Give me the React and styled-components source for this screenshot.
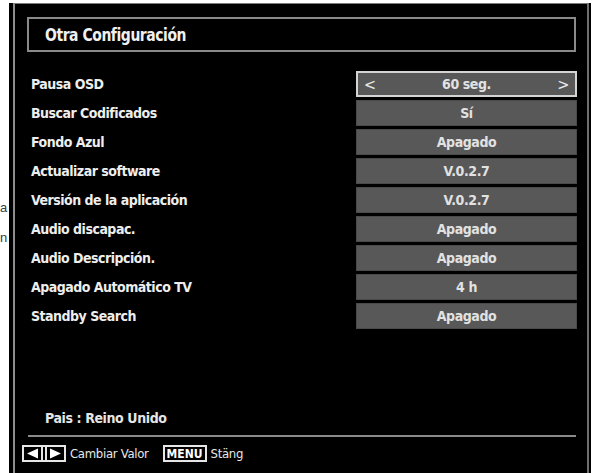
import React from 'react';
import styled, { createGlobalStyle } from 'styled-components';

const GlobalStyle = createGlobalStyle`
  html, body {
    margin: 0;
    padding: 0;
    background: #ffffff;
  }
  * {
    box-sizing: border-box;
  }
`;

const TV_FONT = `"DejaVu Sans", sans-serif`;

const Page = styled.div`
  display: flex;
  width: 593px;
  height: 473px;
  padding-top: 3px;
  overflow: hidden;
  background: #ffffff;
`;

// bits of the printed page that peek out left of the screen
const Gutter = styled.div`
  width: 9px;
  flex-shrink: 0;
  display: flex;
  flex-direction: column;
  align-items: flex-start;
  padding-top: 190px;
  font-family: "Liberation Sans", sans-serif;
  font-size: 13px;
  line-height: 30px;
  color: #3a3a3a;
`;

const StrayLetter = styled.span`
  display: block;
`;

const Frame = styled.div`
  flex: 1;
  margin-right: 2px;
  padding: 0 2px 0 4px;
  background: #000000;
`;

const Inner = styled.div`
  height: 100%;
  display: flex;
  flex-direction: column;
  border-left: 2px solid #8c8c8c;
  border-top: 1px solid #7a7a7a;
  border-right: 2px solid #6e6e6e;
  padding: 13px 11px 0 12px;
  font-family: ${TV_FONT};
  font-stretch: condensed;
  color: #ececec;
`;

const TitleBox = styled.div`
  height: 35px;
  display: flex;
  align-items: center;
  padding-left: 16px;
  border: 2px solid #8a8a8a;
  margin-bottom: 19px;
`;

const Title = styled.h1`
  margin: 0;
  font-size: 18px;
  font-weight: 700;
  letter-spacing: -0.5px;
  color: #f0f0f0;
  transform: scaleX(0.86);
  transform-origin: left center;
`;

const List = styled.div`
  display: grid;
  grid-auto-rows: 26px;
  row-gap: 3px;
`;

const Row = styled.div`
  display: grid;
  grid-template-columns: 1fr 220px;
  align-items: center;
`;

const Label = styled.span`
  padding-left: 4px;
  font-size: 14px;
  font-weight: 700;
  letter-spacing: -0.5px;
  color: #eeeeee;
`;

const Value = styled.div`
  height: 26px;
  display: flex;
  align-items: center;
  justify-content: space-between;
  padding: 0 6px;
  margin-right: -1px;
  background: #585858;
  border: ${(p) => (p.$active ? '2px solid #d4d4d4' : '1px solid #4a4a4a')};
  font-size: 14px;
  font-weight: 700;
  letter-spacing: -0.4px;
  color: #e2e2e2;
`;

const ValueText = styled.span`
  flex: 1;
  text-align: center;
`;

const Arrow = styled.span`
  font-size: 16px;
  font-weight: 400;
  color: #e8e8e8;
`;

const Country = styled.div`
  margin-top: auto;
  padding-left: 18px;
  height: 20px;
  line-height: 20px;
  margin-bottom: 7px;
  font-size: 14px;
  font-weight: 700;
  letter-spacing: -0.4px;
  color: #e6e6e6;
`;

const Divider = styled.div`
  height: 2px;
  margin-left: 1px;
  background: #8a8a8a;
  margin-bottom: 8px;
`;

const Footer = styled.div`
  display: flex;
  align-items: center;
  height: 17px;
  margin-left: -5px;
  margin-bottom: 11px;
  font-size: 13px;
  color: #e8e8e8;
  letter-spacing: -0.3px;
`;

const Hint = styled.span`
  margin-left: 4px;
  margin-right: ${(p) => p.$gap || 0}px;
`;

const KeyBox = styled.span`
  display: inline-flex;
  align-items: center;
  height: 17px;
  padding: 0 2px;
  border: 2px solid #e6e6e6;
  font-size: 12px;
  font-weight: 700;
  color: #ffffff;
  letter-spacing: 0;
`;

const ArrowsKey = () => (
  <svg width="44" height="17" viewBox="0 0 44 17">
    <rect x="1" y="1" width="42" height="15" fill="none" stroke="#e6e6e6" strokeWidth="2" />
    <path d="M16 3.5 L5 8.5 L16 13.5 Z" fill="#ffffff" />
    <rect x="19" y="2" width="2" height="13" fill="#e6e6e6" />
    <rect x="23" y="2" width="2" height="13" fill="#e6e6e6" />
    <path d="M28 3.5 L39 8.5 L28 13.5 Z" fill="#ffffff" />
  </svg>
);

const settings = [
  { label: 'Pausa OSD', value: '60 seg.', active: true },
  { label: 'Buscar Codificados', value: 'Sí' },
  { label: 'Fondo Azul', value: 'Apagado' },
  { label: 'Actualizar software', value: 'V.0.2.7' },
  { label: 'Versión de la aplicación', value: 'V.0.2.7' },
  { label: 'Audio discapac.', value: 'Apagado' },
  { label: 'Audio Descripción.', value: 'Apagado' },
  { label: 'Apagado Automático TV', value: '4 h' },
  { label: 'Standby Search', value: 'Apagado' },
];

export default function App() {
  return (
    <>
      <GlobalStyle />
      <Page>
        <Gutter>
          <StrayLetter>a</StrayLetter>
          <StrayLetter>n</StrayLetter>
        </Gutter>
        <Frame>
          <Inner>
            <TitleBox>
              <Title>Otra Configuración</Title>
            </TitleBox>
            <List>
              {settings.map((s) => (
                <Row key={s.label}>
                  <Label>{s.label}</Label>
                  <Value $active={s.active}>
                    {s.active && <Arrow>&lt;</Arrow>}
                    <ValueText>{s.value}</ValueText>
                    {s.active && <Arrow>&gt;</Arrow>}
                  </Value>
                </Row>
              ))}
            </List>
            <Country>Pais : Reino Unido</Country>
            <Divider />
            <Footer>
              <ArrowsKey />
              <Hint $gap={14}>Cambiar Valor</Hint>
              <KeyBox>MENU</KeyBox>
              <Hint>Stäng</Hint>
            </Footer>
          </Inner>
        </Frame>
      </Page>
    </>
  );
}
